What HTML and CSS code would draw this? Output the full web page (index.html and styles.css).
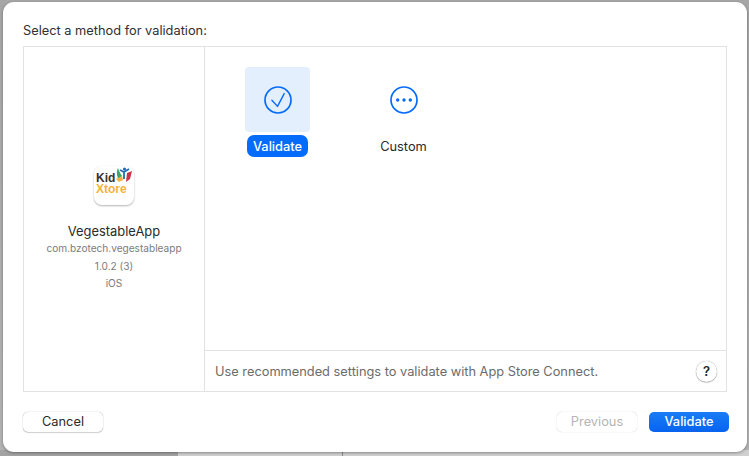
FILE: index.html
```html
<!DOCTYPE html>
<html lang="en">
<head>
<meta charset="utf-8">
<title>Select a method for validation</title>
<link rel="stylesheet" href="styles.css">
</head>
<body>
<div class="sheet">
  <div class="heading">Select a method for validation:</div>
  <div class="panel">
    <aside class="app">
      <div class="app-tile">
        <div class="app-logo"><span class="kid">Kid</span><span class="xtore">Xtore</span></div>
        <svg class="app-mark" viewBox="0 0 18 16" aria-hidden="true">
          <path d="M3 1c1 3 2 5 4 8L4 13C2 10 1 5 3 1z" fill="#3aa46f"/>
          <path d="M1 12l6-3 1 4-4 2z" fill="#f4b13c"/>
          <circle cx="9.500" cy="2" r="1.600" fill="#1f6fb5"/>
          <path d="M5 3l4 2 5-3M9 5v7" stroke="#1f6fb5" stroke-width="1.800" fill="none"/>
          <path d="M12 6l5-2-2 8-4 3z" fill="#c8344a"/>
        </svg>
      </div>
      <div class="app-name">VegestableApp</div>
      <div class="app-meta">com.bzotech.vegestableapp</div>
      <div class="app-meta">1.0.2 (3)</div>
      <div class="app-meta">iOS</div>
    </aside>
    <section class="main">
      <div class="methods">
        <div class="method">
          <div class="tile selected">
            <svg class="glyph" viewBox="0 0 28 28" aria-hidden="true">
              <circle cx="14" cy="14" r="13" fill="none" stroke="#056bfa" stroke-width="1.700"/>
              <path d="M7.900 14.200L13.500 20.400L20.200 7.600" fill="none" stroke="#056bfa" stroke-width="1.400" stroke-linecap="round" stroke-linejoin="round"/>
            </svg>
          </div>
          <div class="label active">Validate</div>
        </div>
        <div class="method">
          <div class="tile">
            <svg class="glyph" viewBox="0 0 28 28" aria-hidden="true">
              <circle cx="14" cy="14" r="13" fill="none" stroke="#056bfa" stroke-width="1.700"/>
              <circle cx="7.700" cy="14" r="1.700" fill="#056bfa"/>
              <circle cx="14" cy="14" r="1.700" fill="#056bfa"/>
              <circle cx="20.300" cy="14" r="1.700" fill="#056bfa"/>
            </svg>
          </div>
          <div class="label">Custom</div>
        </div>
      </div>
      <div class="hint">
        <span>Use recommended settings to validate with App Store Connect.</span>
        <span class="help">?</span>
      </div>
    </section>
  </div>
  <div class="footer">
    <button class="btn" type="button">Cancel</button>
    <div class="right">
      <button class="btn disabled" type="button">Previous</button>
      <button class="btn primary" type="button">Validate</button>
    </div>
  </div>
</div>
</body>
</html>
```
FILE: styles.css
```css
* { box-sizing: border-box; }
html, body { margin: 0; height: 100%; }
body {
  width: 749px;
  height: 456px;
  overflow: hidden;
  background:
    linear-gradient(to right, #a3a3a3 178px, #d0d0d0 178px, #d0d0d0 342px, #8a8a8a 342px, #8a8a8a 343px, #d0d0d0 343px) left bottom / 100% 6px no-repeat,
    linear-gradient(#a6a6a6, #b4b4b4);
  padding: 2px 2px 4px 3px;
  font-family: Inter, "Liberation Sans", sans-serif;
  color: #2a2a2a;
}
.sheet {
  height: 450px;
  background: #fff;
  border-radius: 11px;
  padding: 0 18px 0 20px;
  display: flex;
  flex-direction: column;
  box-shadow: 0 1px 3px rgba(0,0,0,.35);
}
.heading {
  height: 44px;
  padding-top: 21px;
  font-size: 12.800px;
  line-height: 16px;
  color: #303030;
}
.panel {
  height: 346px;
  margin-right: 2px;
  display: flex;
  border: 1px solid #e2e2e2;
}
.app {
  width: 181px;
  flex: none;
  border-right: 1px solid #e2e2e2;
  display: flex;
  flex-direction: column;
  align-items: center;
  padding-top: 119px;
}
.app-tile {
  position: relative;
  width: 40px;
  height: 39px;
  margin-bottom: 18px;
  background: #fff;
  border-radius: 8px;
  box-shadow: 0 1px 2px rgba(0,0,0,.3);
}
.app-logo {
  display: flex;
  flex-direction: column;
  font-family: "Liberation Sans", sans-serif;
  font-weight: 700;
  line-height: 11px;
  padding: 7px 0 0 2px;
}
.kid { font-size: 12px; color: #333; }
.xtore { font-size: 12px; color: #f4b13c; }
.app-mark {
  position: absolute;
  right: 1px;
  top: 1px;
  width: 18px;
  height: 16px;
}
.app-name { font-size: 12.900px; line-height: 17px; color: #2a2a2a; }
.app-meta { font-size: 10.100px; line-height: 17.500px; color: #7c7c7c; }
.main {
  flex: 1;
  display: flex;
  flex-direction: column;
}
.methods {
  flex: 1;
  display: flex;
  gap: 61px;
  padding: 20px 0 0 40px;
}
.method { width: 65px; display: flex; flex-direction: column; align-items: center; }
.tile {
  width: 65px;
  height: 65px;
  border-radius: 4px;
  display: flex;
  align-items: center;
  justify-content: center;
}
.tile.selected { background: #e3effd; }
.glyph { width: 28px; height: 28px; }
.label {
  margin-top: 3px;
  height: 22px;
  padding: 1px 6px 0;
  border-radius: 7px;
  font-size: 12.800px;
  line-height: 21px;
  color: #2a2a2a;
}
.label.active { background: #056bfa; color: #fff; font-weight: 500; }
.hint {
  height: 41px;
  flex: none;
  border-top: 1px solid #e2e2e2;
  display: flex;
  align-items: center;
  justify-content: space-between;
  padding: 0 9px 0 10px;
  font-size: 12.800px;
  color: #6b6b6b;
}
.help {
  width: 21px;
  height: 21px;
  border-radius: 50%;
  background: #fff;
  box-shadow: 0 0 1px rgba(0,0,0,.5), 0 1px 1px rgba(0,0,0,.2);
  display: flex;
  align-items: center;
  justify-content: center;
  font-size: 13px;
  font-weight: 600;
  color: #222;
}
.footer {
  display: flex;
  justify-content: space-between;
  padding-top: 20px;
}
.right { display: flex; gap: 12px; }
.btn {
  width: 80px;
  height: 20px;
  border: 0;
  border-radius: 5px;
  background: #fff;
  box-shadow: 0 0 1px rgba(0,0,0,.45), 0 1px 1px rgba(0,0,0,.15);
  font-family: inherit;
  font-size: 12.800px;
  line-height: 18px;
  color: #2a2a2a;
  padding: 0 0 1px;
}
.btn.disabled { color: #b5b5b5; box-shadow: 0 0 1px rgba(0,0,0,.3); }
.btn.primary {
  background: linear-gradient(#1a7cf7, #0663ef);
  color: #fff;
  font-weight: 500;
  box-shadow: none;
}
```
